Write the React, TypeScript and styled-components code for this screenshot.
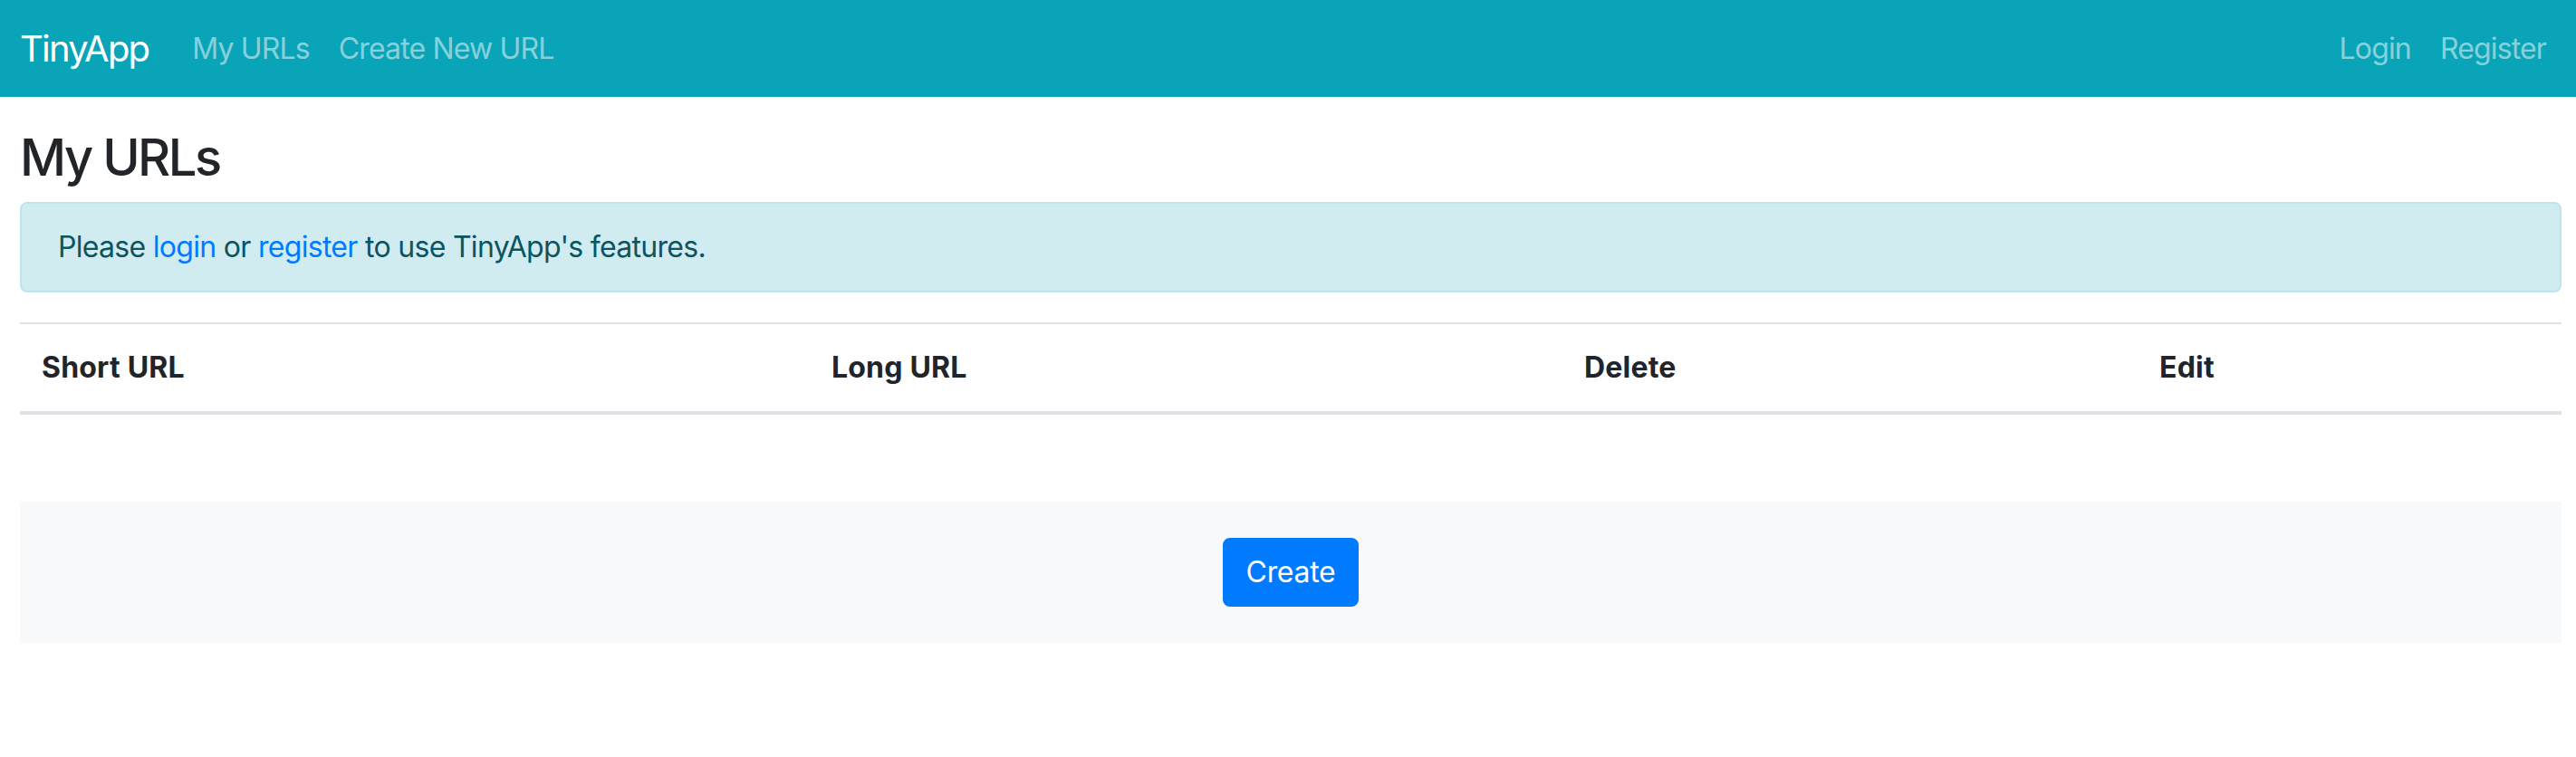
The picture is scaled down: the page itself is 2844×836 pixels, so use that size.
import React from "react";
import styled, { createGlobalStyle } from "styled-components";

const GlobalStyle = createGlobalStyle`
  * { box-sizing: border-box; }
  html, body { margin: 0; padding: 0; background: #fff; }
  body {
    font-family: Inter, "Noto Sans", "Liberation Sans", sans-serif;
    font-size: 32px;
    line-height: 1.5;
    color: #212529;
  }
`;

const Navbar = styled.nav`
  display: flex;
  align-items: center;
  height: 107px;
  padding: 0 17px 0 22px;
  background: #0aa4b8;
`;

const Brand = styled.a`
  font-size: 40px;
  line-height: 1.5;
  color: #fff;
  text-decoration: none;
  margin-right: 32px;
  letter-spacing: -1.8px;
`;

const NavGroup = styled.div<{ $end?: boolean }>`
  display: flex;
  align-items: center;
  margin-left: ${(p) => (p.$end ? "auto" : "0")};
`;

const NavLink = styled.a`
  padding: 0 16px;
  font-size: 32px;
  line-height: 1.5;
  color: rgba(255, 255, 255, 0.52);
  text-decoration: none;
  letter-spacing: -0.85px;
`;

const Main = styled.main`
  padding: 0 16px 0 22px;
`;

const Title = styled.h1`
  margin: 34px 0 15px;
  font-size: 56px;
  font-weight: 500;
  line-height: 1.2;
  color: #212529;
  letter-spacing: -2.5px;
`;

const Alert = styled.div`
  padding: 24px 40px;
  margin-bottom: 33px;
  border: 2px solid #bee5eb;
  border-radius: 8px;
  background: #d1ecf1;
  color: #0c5460;
  letter-spacing: -0.7px;
`;

const AlertLink = styled.a`
  color: #007bff;
  text-decoration: none;
`;

const Table = styled.table`
  width: 100%;
  border-collapse: collapse;
  table-layout: fixed;
  margin-bottom: 96px;
`;

const HeadCell = styled.th<{ $w?: number }>`
  width: ${(p) => (p.$w ? `${p.$w}px` : "auto")};
  padding: 24px;
  text-align: left;
  font-weight: 700;
  line-height: 1.5;
  border-top: 2px solid #dee2e6;
  border-bottom: 4px solid #dee2e6;
  letter-spacing: 0.2px;
`;

const Footer = styled.div`
  display: flex;
  justify-content: center;
  padding: 40px 0;
  background: #f8f9fa;
`;

const Button = styled.button`
  padding: 12px 24px;
  border: 2px solid #007bff;
  border-radius: 8px;
  background: #007bff;
  color: #fff;
  font-family: inherit;
  font-size: 32px;
  line-height: 1.5;
  letter-spacing: -0.3px;
  cursor: pointer;
`;

export default function App() {
  return (
    <>
      <GlobalStyle />
      <Navbar>
        <Brand href="#">TinyApp</Brand>
        <NavGroup>
          <NavLink href="#">My URLs</NavLink>
          <NavLink href="#">Create New URL</NavLink>
        </NavGroup>
        <NavGroup $end>
          <NavLink href="#">Login</NavLink>
          <NavLink href="#">Register</NavLink>
        </NavGroup>
      </Navbar>
      <Main>
        <Title>My URLs</Title>
        <Alert>
          Please <AlertLink href="#">login</AlertLink> or{" "}
          <AlertLink href="#">register</AlertLink> to use TinyApp's features.
        </Alert>
        <Table>
          <thead>
            <tr>
              <HeadCell $w={872}>Short URL</HeadCell>
              <HeadCell $w={831}>Long URL</HeadCell>
              <HeadCell $w={635}>Delete</HeadCell>
              <HeadCell>Edit</HeadCell>
            </tr>
          </thead>
          <tbody></tbody>
        </Table>
        <Footer>
          <Button>Create</Button>
        </Footer>
      </Main>
    </>
  );
}
